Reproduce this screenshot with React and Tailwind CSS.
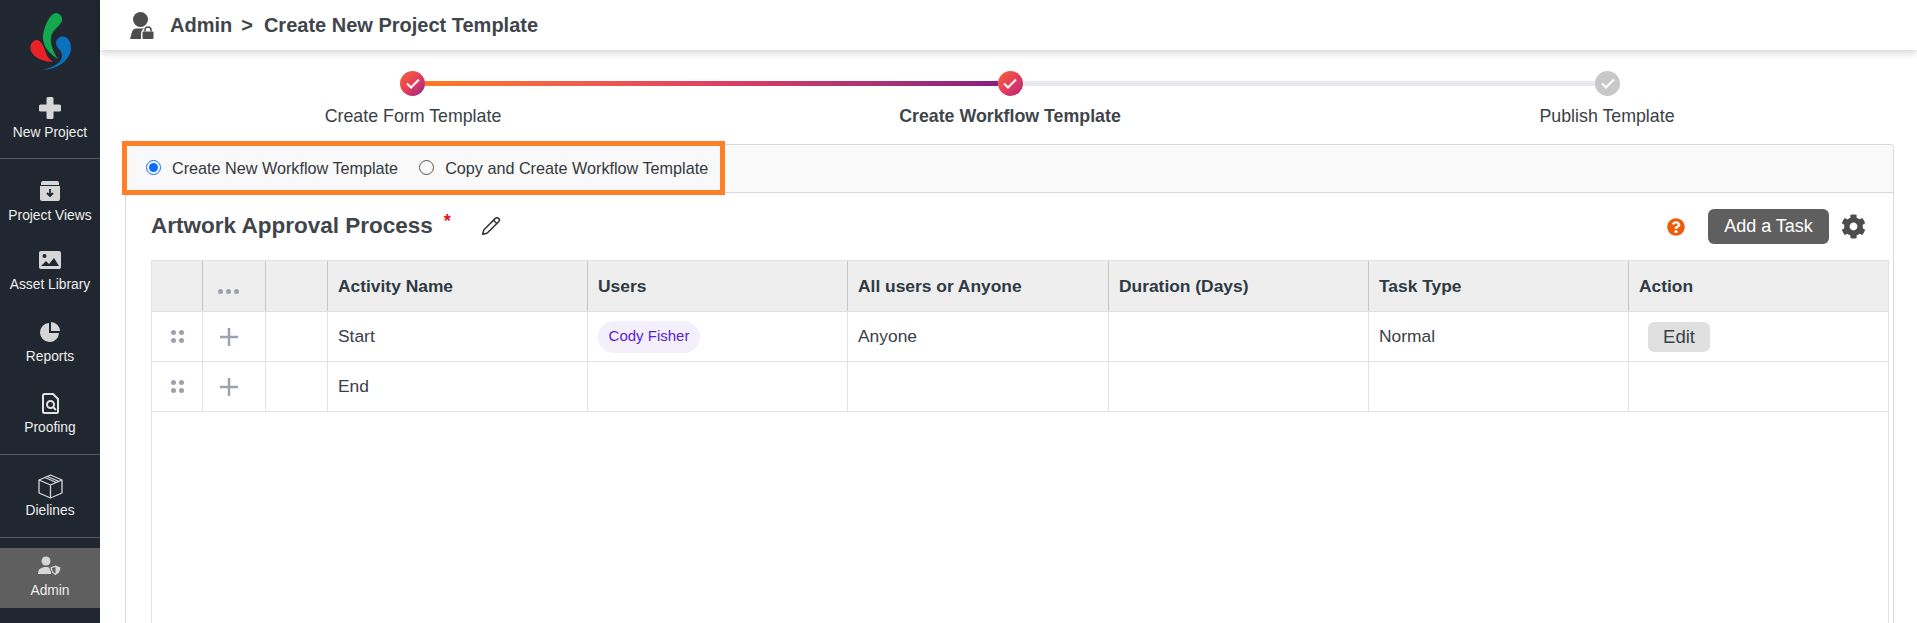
import React from "react";
import { FaCog, FaQuestionCircle } from "react-icons/fa";
import { Pencil } from "lucide-react";

const Logo = () => (
  <svg width="46" height="60" viewBox="0 0 46 60">
    <path d="M28 1C31 1 35 4 34 9C32 14 25 17 23 25C22 33 26 41 30 47C22 42 15 35 15 26C15 16 22 1 28 1Z" fill="#12a84e" />
    <path d="M8 28C14 28 16 36 18 41C19 45 22 48 25 50C16 50 6 46 3 39C1 34 4 29 8 28Z" fill="#ea2227" />
    <path d="M32 25C38 23 43 28 43 36C43 47 30 58 15 57.500C27 55 34 50 34 44C34 38 28 36 28 31C28 28 30 26 32 25Z" fill="#0a72bd" />
  </svg>
);

const PlusIcon = () => (
  <svg width="22" height="22" viewBox="0 0 22 22" fill="#d6d6d6">
    <path d="M9 0h4a1.500 1.500 0 0 1 1.500 1.500V7.500H20.500A1.500 1.500 0 0 1 22 9v4a1.500 1.500 0 0 1-1.500 1.500H14.500V20.500A1.500 1.500 0 0 1 13 22H9a1.500 1.500 0 0 1-1.500-1.500V14.500H1.500A1.500 1.500 0 0 1 0 13V9a1.500 1.500 0 0 1 1.500-1.500H7.500V1.500A1.500 1.500 0 0 1 9 0Z" />
  </svg>
);

const ArchiveIcon = () => (
  <svg width="20" height="20" viewBox="0 0 20 20">
    <path d="M3 0h14a2 2 0 0 1 2 2v2H1V2a2 2 0 0 1 2-2Z" fill="#d6d6d6" />
    <path d="M0 5h20v13a2 2 0 0 1-2 2H2a2 2 0 0 1-2-2Z" fill="#d6d6d6" />
    <path d="M10 8v6M7 12l3 3 3-3" stroke="#212730" strokeWidth="1.800" fill="none" />
  </svg>
);

const ImageIcon = () => (
  <svg width="22" height="18" viewBox="0 0 22 18">
    <rect width="22" height="18" rx="2" fill="#d6d6d6" />
    <circle cx="5.500" cy="5" r="2" fill="#212730" />
    <path d="M2 15l5-5 3 3 5-6 5 8Z" fill="#212730" />
  </svg>
);

const PieIcon = () => (
  <svg width="20" height="20" viewBox="0 0 20 20" fill="#d6d6d6">
    <path d="M9 1a9.500 9.500 0 1 0 10 10H9Z" />
    <path d="M11 0a9 9 0 0 1 9 9h-9Z" />
  </svg>
);

const ProofIcon = () => (
  <svg width="17" height="21" viewBox="0 0 17 21" fill="none" stroke="#e2e2e2" strokeWidth="2">
    <path d="M2.500 1H11l5 5v12.500a1.500 1.500 0 0 1-1.500 1.500h-12A1.500 1.500 0 0 1 1 18.500v-16A1.500 1.500 0 0 1 2.500 1Z" />
    <circle cx="8.500" cy="11.500" r="3.500" />
    <path d="M11 14l3 3" />
  </svg>
);

const BoxIcon = () => (
  <svg width="25" height="25" viewBox="0 0 25 25" fill="none" stroke="#d6d6d6" strokeWidth="1.300" strokeLinejoin="round">
    <path d="M12.500 1L24 6v13l-11.500 5L1 19V6Z" />
    <path d="M1 6l11.500 5L24 6M12.500 11v13M7 3.500l11.500 5M9.500 2.500l11.500 5" />
  </svg>
);

const AdminIcon = () => (
  <svg width="24" height="20" viewBox="0 0 24 20">
    <circle cx="8" cy="5" r="4.500" fill="#d6d6d6" />
    <path d="M0 18c0-5 3-7 8-7 2 0 4 .5 5 1.500V18Z" fill="#d6d6d6" />
    <path d="M17.500 9L23 11c0 4-2 7-5.500 8.500C14 18 12 15 12 11Z" fill="#d6d6d6" stroke="#5f5f5f" strokeWidth="1" />
    <path d="M17.500 11v6.500c-2.500-1-3.500-3.500-3.500-5.500Z" fill="#5f5f5f" />
  </svg>
);

const UserLockIcon = () => (
  <svg width="24" height="27" viewBox="0 0 24 27" fill="#4d4d4d">
    <circle cx="10.500" cy="7.500" r="7.500" />
    <path d="M0 27l2-7c.5-2 2-3.500 4.500-3.500h8c-2 1-3.500 2.500-3.500 5V27Z" />
    <rect x="12.500" y="19.500" width="11" height="7.500" rx="1" />
    <path d="M15 19.500v-1.500a3 3 0 0 1 6 0v1.500" fill="none" stroke="#4d4d4d" strokeWidth="1.500" />
  </svg>
);

const Dots = ({ rows = 2, cols = 2 }) => (
  <div className="grid gap-x-[3px] gap-y-[3px]" style={{ gridTemplateColumns: `repeat(${cols}, 5px)` }}>
    {Array.from({ length: rows * cols }).map((_, i) => (
      <span key={i} className="w-[5px] h-[5px] rounded-full bg-[#9ca3af]" />
    ))}
  </div>
);

const AddIcon = () => (
  <svg width="18" height="18" viewBox="0 0 18 18" stroke="#9ca3af" strokeWidth="2.500">
    <path d="M9 0v18M0 9h18" />
  </svg>
);

const Check = ({ color = "white" }) => (
  <svg width="14" height="11" viewBox="0 0 14 11" fill="none" stroke={color} strokeWidth="2">
    <path d="M1 5.500l4 4 8-8" />
  </svg>
);

const SideItem = ({ icon, label, active, className = "" }) => (
  <div className={`flex flex-col items-center justify-end text-[13.800px] leading-[16px] ${active ? "bg-[#5f5f5f]" : ""} ${className}`}>
    <div className="flex items-center justify-center h-[26px] mb-[4px]">{icon}</div>
    <span className="text-[#eeeeee]">{label}</span>
  </div>
);

const Divider = ({ className = "" }) => <div className={`h-px bg-[#55595f] ${className}`} />;

const columns = "grid-cols-[51px_63px_62px_260px_260px_261px_260px_260px_1fr]";

const rows = [
  { name: "Start", user: "Cody Fisher", mode: "Anyone", type: "Normal", edit: true },
  { name: "End" },
];

const Cell = ({ children, className = "" }) => (
  <div className={`flex items-center border-r border-[#e2e2e2] last:border-r-0 ${className}`}>{children}</div>
);

const HeadCell = ({ children, className = "" }) => (
  <div className={`flex items-center pl-[10px] border-r border-[#c5c5c5] last:border-r-0 font-bold text-[#2f3a44] ${className}`}>{children}</div>
);

const Radio = ({ checked, label }) => (
  <label className="flex items-center gap-[11px]">
    <span className={`w-[15px] h-[15px] rounded-full flex items-center justify-center border-[1.5px] ${checked ? "border-[#0d6efd]" : "border-[#555555]"}`}>
      {checked && <span className="w-[9px] h-[9px] rounded-full bg-[#0d6efd]" />}
    </span>
    <span>{label}</span>
  </label>
);

export default function App() {
  return (
    <div className="flex h-[623px] w-[1917px] overflow-hidden bg-white font-['Liberation_Sans',Arial,sans-serif] text-[#3a4047]">
      {/* Sidebar */}
      <aside className="w-[100px] shrink-0 bg-[#212730] flex flex-col">
        <div className="h-[74px] flex items-start justify-center pt-[12px] pl-[1px]">
          <Logo />
        </div>
        <SideItem icon={<PlusIcon />} label="New Project" className="h-[67px]" />
        <Divider className="mt-[17px]" />
        <SideItem icon={<ArchiveIcon />} label="Project Views" className="h-[65px]" />
        <SideItem icon={<ImageIcon />} label="Asset Library" className="h-[69px]" />
        <SideItem icon={<PieIcon />} label="Reports" className="h-[72px]" />
        <SideItem icon={<ProofIcon />} label="Proofing" className="h-[71px]" />
        <Divider className="mt-[18px]" />
        <SideItem icon={<BoxIcon />} label="Dielines" className="h-[64px]" />
        <Divider className="mt-[18px]" />
        <SideItem icon={<AdminIcon />} label="Admin" active className="h-[60px] mt-[10px] pb-[9px]" />
      </aside>

      <main className="flex-1 min-w-0 flex flex-col">
        {/* Top bar */}
        <header className="h-[50px] shrink-0 flex items-center pl-[30px] shadow-[0_2px_8px_rgba(0,0,0,0.2)] text-[20px] font-bold text-[#40454b]">
          <UserLockIcon />
          <span className="ml-[16px]">Admin</span>
          <span className="ml-[9px] mr-[11px]">&gt;</span>
          <span>Create New Project Template</span>
        </header>

        {/* Stepper */}
        <div className="h-[94px] shrink-0 pt-[21px]">
          <div className="flex items-center pl-[300px] pr-[297px]">
            <span className="w-[25px] h-[25px] shrink-0 rounded-full flex items-center justify-center bg-gradient-to-br from-[#f2622c] via-[#e83d58] to-[#8f1f86]">
              <Check />
            </span>
            <span className="flex-1 h-[5px] bg-gradient-to-r from-[#ff7a21] via-[#e0405e] to-[#86207f]" />
            <span className="w-[25px] h-[25px] shrink-0 rounded-full flex items-center justify-center bg-gradient-to-br from-[#f2622c] via-[#e83d58] to-[#b0227a]">
              <Check />
            </span>
            <span className="flex-1 h-[5px] bg-[#e9e8ef]" />
            <span className="w-[25px] h-[25px] shrink-0 rounded-full flex items-center justify-center bg-[#c8c8c8]">
              <Check />
            </span>
          </div>
          <div className="grid grid-cols-[597px_597px_597px] ml-[14.5px] mt-[10px] text-[17.800px] leading-[20px] text-center">
            <span>Create Form Template</span>
            <span className="font-bold text-[#40454b]">Create Workflow Template</span>
            <span>Publish Template</span>
          </div>
        </div>

        {/* Card */}
        <section className="flex-1 min-h-0 flex flex-col ml-[25px] mr-[23px] border-x border-t border-[#d9d9d9] rounded-t-[4px]">
          <div className="h-[48px] shrink-0 bg-[#f9f9f9] border-b border-[#d9d9d9] rounded-t-[4px]">
            <div className="w-[603px] h-[54px] -mt-[4px] -ml-[4px] border-[5px] border-[#ff7f27] flex items-center pl-[19px] gap-[21px] text-[16.200px] text-[#33383e]">
              <Radio checked label="Create New Workflow Template" />
              <Radio label="Copy and Create Workflow Template" />
            </div>
          </div>

          <div className="flex-1 min-h-0 flex flex-col pl-[25px] pr-[4px]">
            <div className="h-[67px] shrink-0 flex items-center">
              <h1 className="text-[22.500px] font-bold text-[#40454b] -mt-[1px]">Artwork Approval Process</h1>
              <span className="text-[#e0141c] text-[18px] font-bold ml-[11px] -mt-[10px]">*</span>
              <Pencil size={20} strokeWidth={1.800} className="ml-[30px] text-[#333333] -mt-[1px]" />
              <FaQuestionCircle size={18} className="ml-auto text-[#ee5c0b]" />
              <button className="ml-[23px] w-[121px] h-[35px] rounded-[6px] bg-[#5f5f5f] text-white text-[18px]">Add a Task</button>
              <FaCog size={25} className="ml-[12px] mr-[23px] text-[#4d4d4d]" />
            </div>

            <div className="flex-1 min-h-0 border-x border-t border-[#e2e2e2] text-[17.400px]">
              <div className={`grid ${columns} h-[51px] bg-[#eeeeee] border-b border-[#e2e2e2]`}>
                <HeadCell />
                <HeadCell className="!pl-[15px] pt-[10px]"><Dots rows={1} cols={3} /></HeadCell>
                <HeadCell />
                <HeadCell>Activity Name</HeadCell>
                <HeadCell>Users</HeadCell>
                <HeadCell>All users or Anyone</HeadCell>
                <HeadCell>Duration (Days)</HeadCell>
                <HeadCell>Task Type</HeadCell>
                <HeadCell>Action</HeadCell>
              </div>
              {rows.map((r) => (
                <div key={r.name} className={`grid ${columns} h-[50px] border-b border-[#e2e2e2]`}>
                  <Cell className="justify-center"><Dots /></Cell>
                  <Cell className="pl-[17px]"><AddIcon /></Cell>
                  <Cell />
                  <Cell className="pl-[10px]">{r.name}</Cell>
                  <Cell className="pl-[10px]">
                    {r.user && (
                      <span className="h-[32px] w-[102px] rounded-full bg-[#f3f0fb] text-[#5b21d6] text-[15px] flex items-center justify-center">{r.user}</span>
                    )}
                  </Cell>
                  <Cell className="pl-[10px]">{r.mode}</Cell>
                  <Cell />
                  <Cell className="pl-[10px]">{r.type}</Cell>
                  <Cell className="pl-[19px]">
                    {r.edit && <button className="w-[62px] h-[30px] rounded-[6px] bg-[#e0e0e0] text-[18.500px]">Edit</button>}
                  </Cell>
                </div>
              ))}
            </div>
          </div>
        </section>
      </main>
    </div>
  );
}
